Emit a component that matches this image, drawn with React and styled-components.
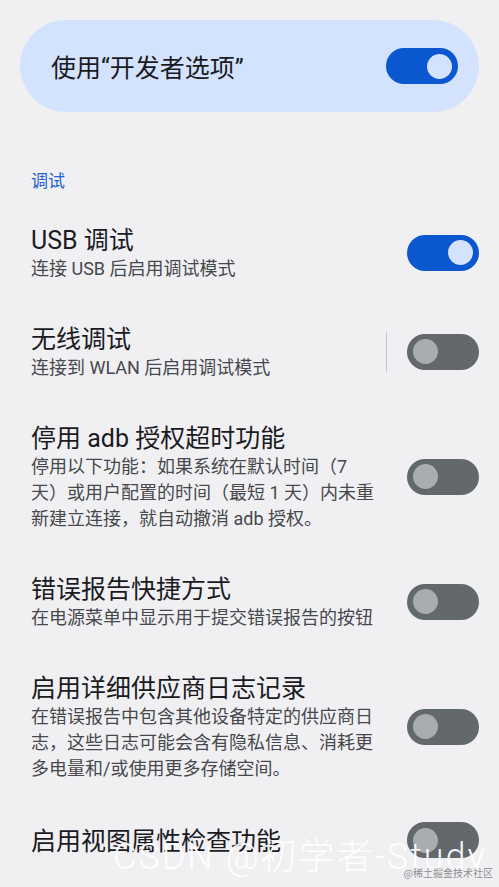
import React from "react";
import styled, { createGlobalStyle } from "styled-components";

const GlobalStyle = createGlobalStyle`
  html, body {
    margin: 0;
    padding: 0;
    background: #f0f0f3;
  }
  body {
    font-family: "Roboto", "Noto Sans CJK SC", sans-serif;
  }
`;

const Page = styled.div`
  position: relative;
  height: 887px;
  overflow: hidden;
  background: #f0f0f3;
`;

const MainCard = styled.div`
  margin: 20px 20px 0;
  height: 92px;
  border-radius: 46px;
  background: #d3e3fd;
  display: flex;
  align-items: center;
  justify-content: space-between;
  padding: 0 21px 0 31px;
  box-sizing: border-box;
`;

const MainTitle = styled.div`
  font-size: 25px;
  color: #1b1b1f;
`;

const SectionHeader = styled.div`
  padding: 57px 31px 11px;
  font-size: 17px;
  line-height: 24px;
  color: #1f63d6;
`;

const Row = styled.div`
  display: flex;
  align-items: center;
  padding: 21px 20px 21px 31px;
`;

const TextCol = styled.div`
  width: 345px;
  flex-shrink: 0;
`;

const Title = styled.div`
  font-size: 25px;
  line-height: 31px;
  color: #1b1b1f;
`;

const Summary = styled.div`
  font-size: 18px;
  line-height: 26px;
  color: #46484b;
`;

const SwitchArea = styled.div`
  flex: 1;
  display: flex;
  align-items: center;
  justify-content: flex-end;
  margin-top: -2px;
`;

const Divider = styled.div`
  width: 1px;
  height: 40px;
  background: #c5c7ca;
  margin-right: 20px;
`;

const Track = styled.div`
  width: 72px;
  height: 36px;
  border-radius: 18px;
  box-sizing: border-box;
  padding: 0 6px;
  display: flex;
  align-items: center;
  justify-content: ${(p) => (p.$on ? "flex-end" : "flex-start")};
  background: ${(p) => (p.$on ? "#0b57d0" : "#62686b")};
  flex-shrink: 0;
`;

const Thumb = styled.div`
  width: 25px;
  height: 25px;
  border-radius: 50%;
  background: ${(p) => (p.$on ? "#d3e3fd" : "#a8adb1")};
`;

const Watermark = styled.div`
  position: absolute;
  left: 113px;
  top: 837px;
  font-family: "Roboto", "Noto Sans CJK SC", sans-serif;
  font-weight: 300;
  font-size: 36px;
  line-height: 40px;
  letter-spacing: 2px;
  color: rgba(255, 255, 255, 0.95);
  white-space: nowrap;
`;

const SiteMark = styled.div`
  position: absolute;
  right: 6px;
  bottom: 8px;
  font-family: "Noto Sans CJK SC", sans-serif;
  font-size: 10px;
  line-height: 12px;
  color: #8e8e92;
`;

const Switch = ({ on }) => (
  <Track $on={on}>
    <Thumb $on={on} />
  </Track>
);

const settings = [
  { title: "USB 调试", summary: "连接 USB 后启用调试模式", on: true },
  { title: "无线调试", summary: "连接到 WLAN 后启用调试模式", divider: true },
  {
    title: "停用 adb 授权超时功能",
    summary:
      "停用以下功能：如果系统在默认时间（7 天）或用户配置的时间（最短 1 天）内未重新建立连接，就自动撤消 adb 授权。",
  },
  { title: "错误报告快捷方式", summary: "在电源菜单中显示用于提交错误报告的按钮" },
  {
    title: "启用详细供应商日志记录",
    summary:
      "在错误报告中包含其他设备特定的供应商日志，这些日志可能会含有隐私信息、消耗更多电量和/或使用更多存储空间。",
  },
  { title: "启用视图属性检查功能", summary: "" },
];

export default function App() {
  return (
    <Page>
      <GlobalStyle />
      <MainCard>
        <MainTitle>使用“开发者选项”</MainTitle>
        <Switch on />
      </MainCard>
      <SectionHeader>调试</SectionHeader>
      {settings.map((s) => (
        <Row key={s.title}>
          <TextCol>
            <Title>{s.title}</Title>
            {s.summary && <Summary>{s.summary}</Summary>}
          </TextCol>
          <SwitchArea>
            {s.divider && <Divider />}
            <Switch on={s.on} />
          </SwitchArea>
        </Row>
      ))}
      <Watermark>CSDN @初学者-Study</Watermark>
      <SiteMark>@稀土掘金技术社区</SiteMark>
    </Page>
  );
}
